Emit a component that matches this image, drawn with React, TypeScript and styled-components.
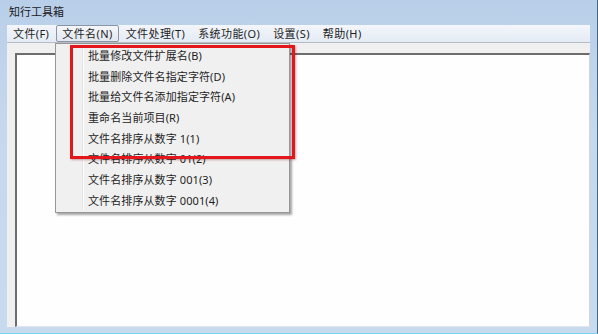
import styled, { createGlobalStyle } from 'styled-components';

const GlobalStyle = createGlobalStyle`
  html, body {
    margin: 0;
    padding: 0;
    background: #c3d6ec;
  }
  * {
    box-sizing: border-box;
  }
`;

const menus = [
  { label: '文件(F)', active: false },
  { label: '文件名(N)', active: true },
  { label: '文件处理(T)', active: false },
  { label: '系统功能(O)', active: false },
  { label: '设置(S)', active: false },
  { label: '帮助(H)', active: false },
];

const items = [
  '批量修改文件扩展名(B)',
  '批量删除文件名指定字符(D)',
  '批量给文件名添加指定字符(A)',
  '重命名当前项目(R)',
  '文件名排序从数字 1(1)',
  '文件名排序从数字 01(2)',
  '文件名排序从数字 001(3)',
  '文件名排序从数字 0001(4)',
];

export default function App() {
  return (
    <>
      <GlobalStyle />
      <Window>
        <TitleBar>知行工具箱</TitleBar>
        <Body>
          <MenuBar>
            {menus.map((m) => (
              <MenuItem key={m.label} $active={m.active}>
                {m.label}
              </MenuItem>
            ))}
          </MenuBar>
          <Strip />
          <Client>
            <EditBox />
          </Client>
        </Body>

        <Dropdown>
          <Gutter />
          {items.map((text) => (
            <DropItem key={text}>{text}</DropItem>
          ))}
        </Dropdown>

        <Highlight />
      </Window>
    </>
  );
}

const Window = styled.div`
  position: relative;
  width: 598px;
  height: 334px;
  display: flex;
  flex-direction: column;
  background: linear-gradient(#b9cfe9, #c6d8ed 40%, #c8daee);
  border-right: 1px solid #3f6a86;
  border-bottom: 1px solid #7fd0ee;
  font-family: 'Noto Sans', 'Noto Sans CJK SC', sans-serif;
  color: #1e1e1e;
  overflow: hidden;
`;

const TitleBar = styled.div`
  height: 25px;
  padding: 5px 0 0 9px;
  font-size: 11px;
  line-height: 14px;
  color: #1a1a1a;
`;

const Body = styled.div`
  flex: 1;
  margin: 0 7px 6px 7px;
  display: flex;
  flex-direction: column;
  background: #f0f0f0;
`;

const MenuBar = styled.div`
  height: 18px;
  display: flex;
  align-items: center;
  padding-left: 0;
  background: linear-gradient(#f3f6fb, #e4ebf4);
  border-bottom: 1px solid #b6bcc6;
`;

const MenuItem = styled.div<{ $active: boolean }>`
  height: 17px;
  padding: 0 5px;
  margin-right: 1px;
  font-size: 11px;
  line-height: 15px;
  letter-spacing: 0.4px;
  white-space: nowrap;
  border: 1px solid ${(p) => (p.$active ? '#8a96a6' : 'transparent')};
  border-radius: 2px;
  background: ${(p) => (p.$active ? 'linear-gradient(#f4f6f9, #e3e8ef)' : 'transparent')};
`;

const Strip = styled.div`
  height: 10px;
  background: #f0f0f0;
`;

const Client = styled.div`
  flex: 1;
  display: flex;
  padding: 0 0 0 8px;
`;

const EditBox = styled.div`
  flex: 1;
  background: #fefefe;
  border-top: 2px solid #6d6d6d;
  border-left: 2px solid #6d6d6d;
  border-right: 1px solid #d4d4d4;
  border-bottom: 1px solid #e0e6ee;
`;

const Dropdown = styled.div`
  position: absolute;
  left: 55px;
  top: 43px;
  width: 235px;
  padding: 2px 0 0 0;
  height: 170px;
  background: #f0f0f0;
  border: 1px solid #979797;
  box-shadow: 2px 2px 2px rgba(0, 0, 0, 0.35);
`;

const Gutter = styled.div`
  position: absolute;
  left: 26px;
  top: 2px;
  bottom: 2px;
  width: 2px;
  border-left: 1px solid #e2e3e3;
  border-right: 1px solid #ffffff;
`;

const DropItem = styled.div`
  height: 20.7px;
  padding-left: 32px;
  font-size: 11px;
  line-height: 20.7px;
  letter-spacing: 0.1px;
  white-space: nowrap;
  color: #1e1e1e;
`;

const Highlight = styled.div`
  position: absolute;
  left: 70px;
  top: 45px;
  width: 225px;
  height: 114px;
  border: 3px solid #e3161c;
  box-shadow: 1px 1px 2px rgba(120, 0, 0, 0.35);
`;
